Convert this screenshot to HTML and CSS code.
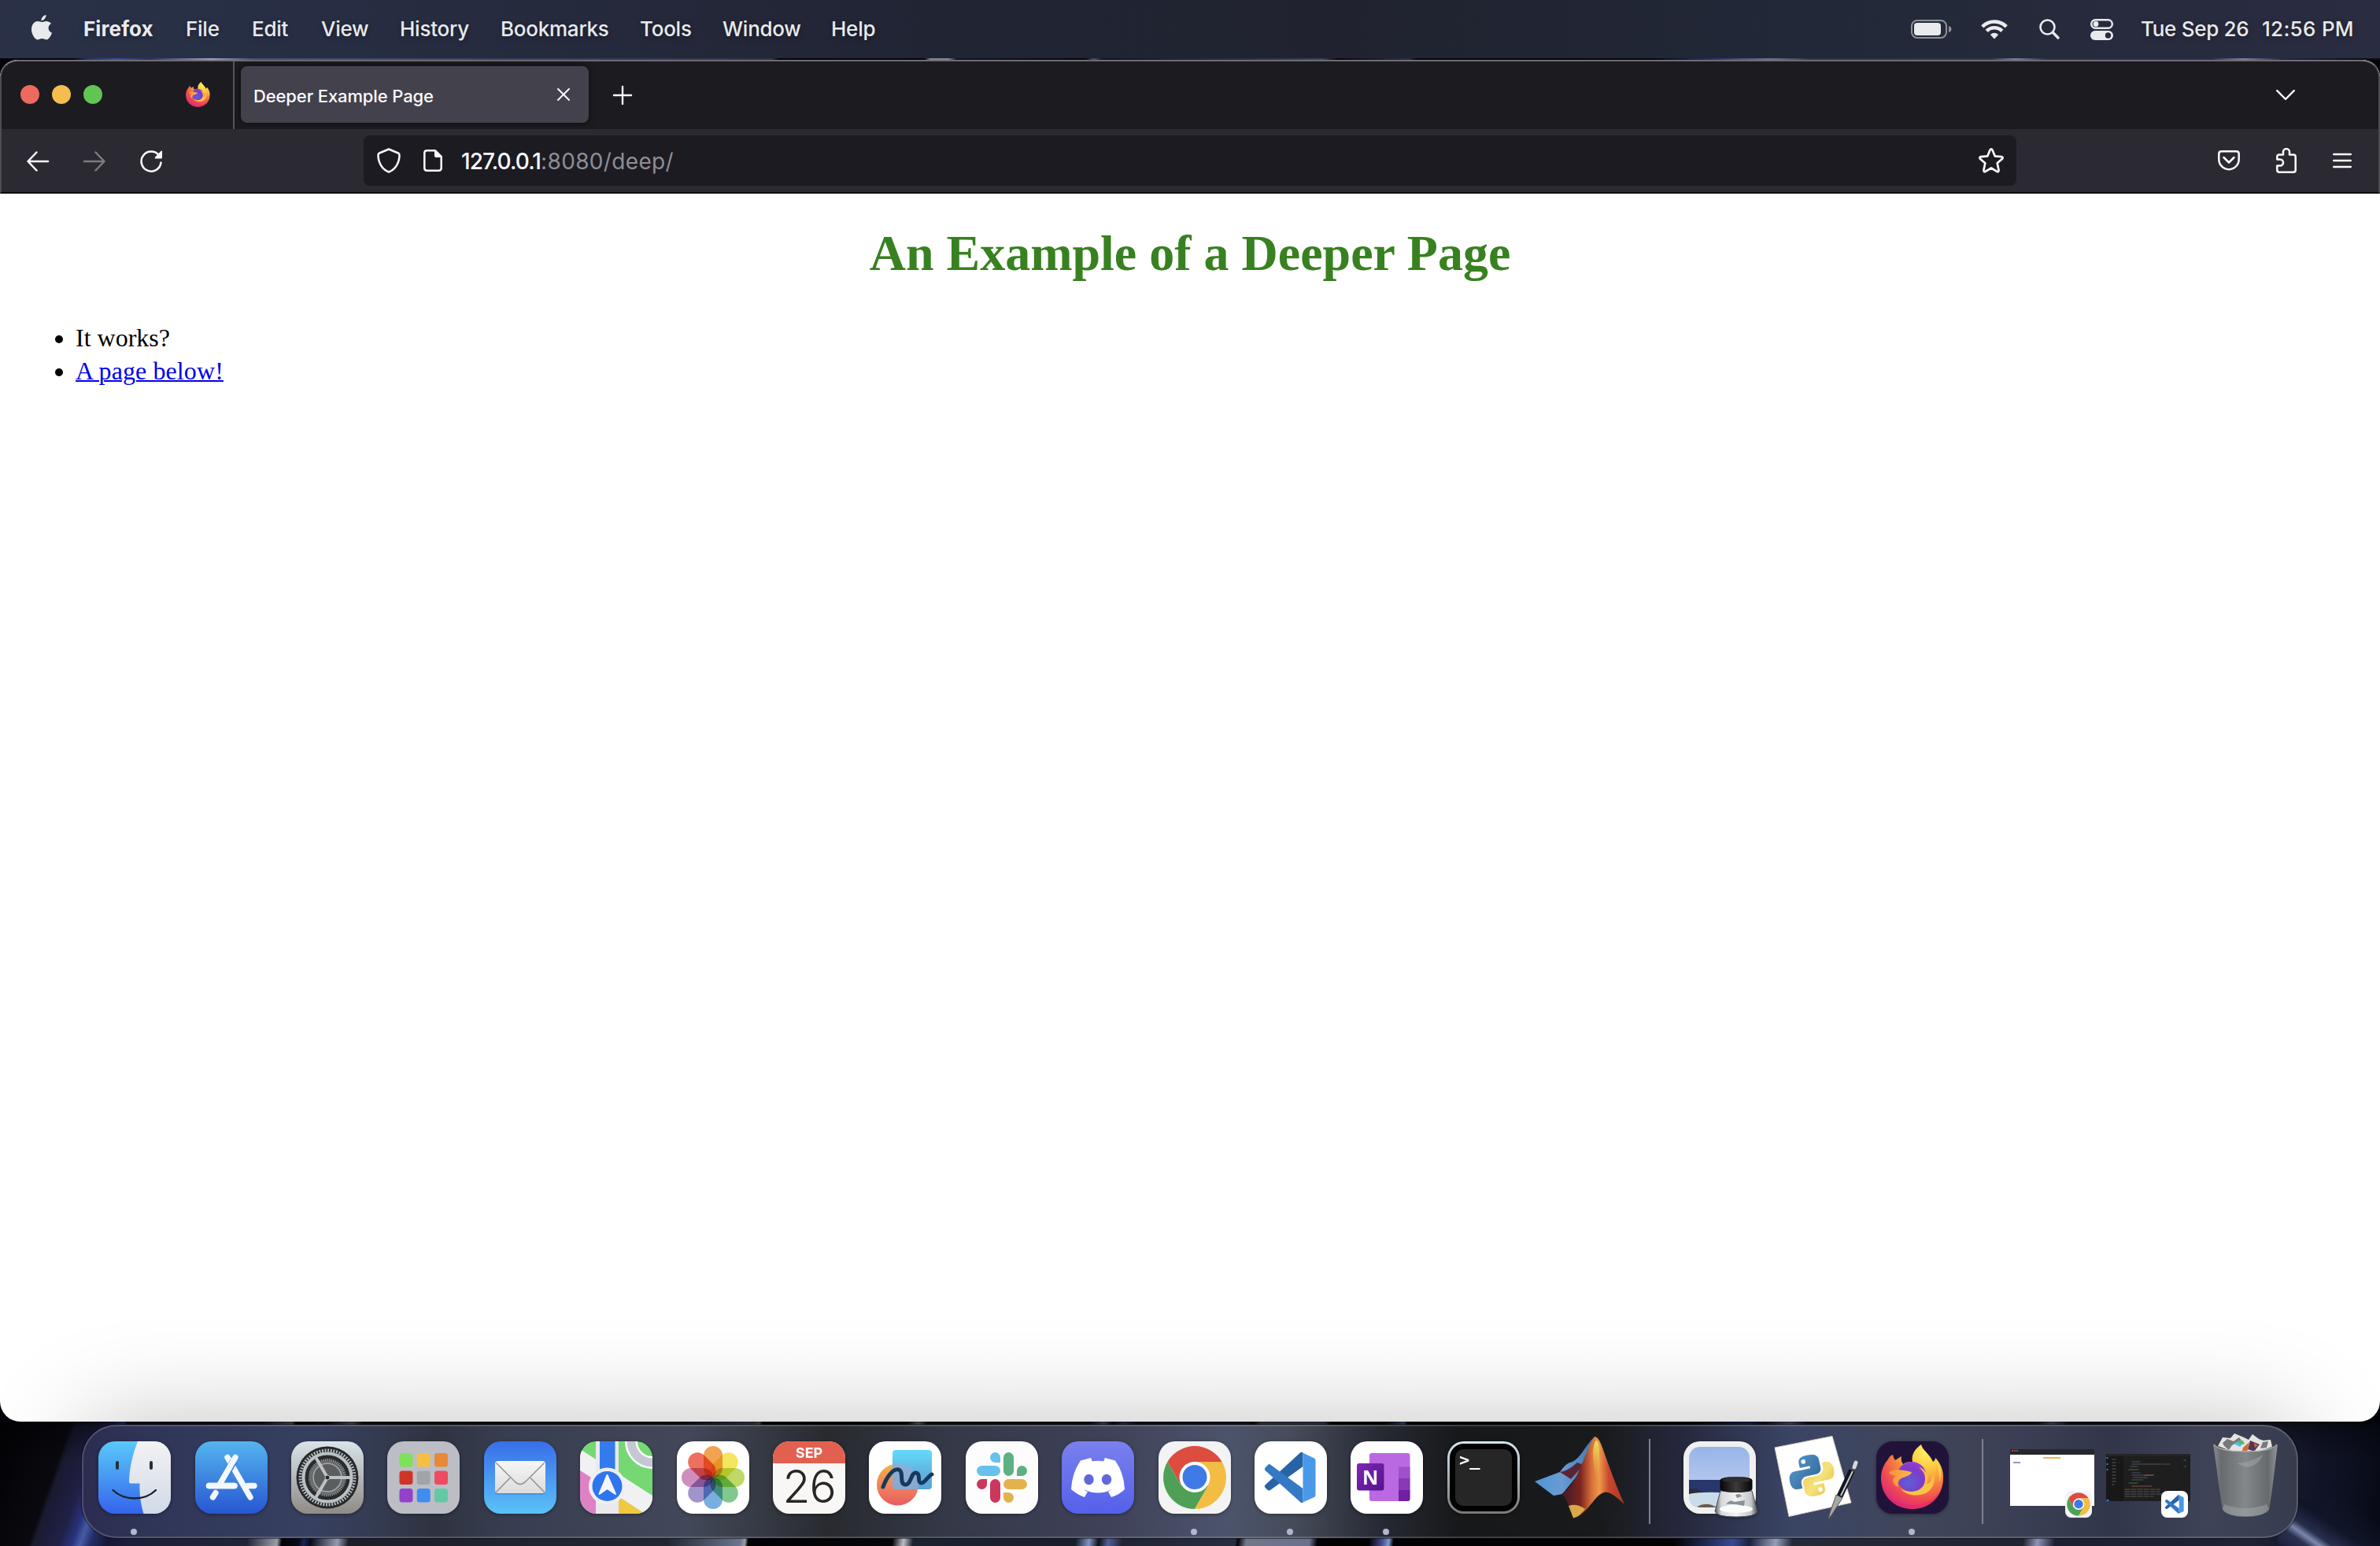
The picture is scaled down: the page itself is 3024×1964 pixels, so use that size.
FILE: index.html
```html
<!DOCTYPE html>
<html lang="en">
<head>
<meta charset="utf-8">
<title>Deeper Example Page</title>
<link rel="stylesheet" href="styles.css">
</head>
<body>
<svg class="defs" width="0" height="0" aria-hidden="true">
  <defs>
    <linearGradient id="gFinder" x2="0" y2="1"><stop stop-color="#5ac9f9"/><stop offset="1" stop-color="#3464ec"/></linearGradient>
    <linearGradient id="gFace" x2="0" y2="1"><stop stop-color="#f3f2f4"/><stop offset="1" stop-color="#d1dae7"/></linearGradient>
    <linearGradient id="gStore" x2="0" y2="1"><stop stop-color="#54b5ee"/><stop offset="1" stop-color="#2756d2"/></linearGradient>
    <linearGradient id="gSet" x2="0" y2="1"><stop stop-color="#d9e4ea"/><stop offset="1" stop-color="#8f8b86"/></linearGradient>
    <linearGradient id="gMail" x2="0" y2="1"><stop stop-color="#386ee9"/><stop offset="1" stop-color="#5bc2f8"/></linearGradient>
    <linearGradient id="gPaper" x2="0" y2="1"><stop stop-color="#f6f6f6"/><stop offset="1" stop-color="#dcdcdc"/></linearGradient>
    <linearGradient id="gDiscord" x2="0" y2="1"><stop stop-color="#7a80ee"/><stop offset="1" stop-color="#5460ea"/></linearGradient>
    <linearGradient id="gFreeSq" x2="0" y2="1"><stop stop-color="#63dafb"/><stop offset=".55" stop-color="#61b6e0"/><stop offset="1" stop-color="#5aa5d6"/></linearGradient>
    <linearGradient id="gFreeC" x2="0" y2="1"><stop stop-color="#f2b344"/><stop offset=".6" stop-color="#ef7e5c"/><stop offset="1" stop-color="#e95c62"/></linearGradient>
    <linearGradient id="gTerm" x2="0" y2="1"><stop stop-color="#d4e6f0"/><stop offset="1" stop-color="#7b7976"/></linearGradient>
    <linearGradient id="gNote" x2="1" y2="1"><stop stop-color="#7d27b4"/><stop offset="1" stop-color="#55138f"/></linearGradient>
    <linearGradient id="gMatR" x2="1" y2="0"><stop stop-color="#3a1a28"/><stop offset=".3" stop-color="#7b2420"/><stop offset=".48" stop-color="#d8703a"/><stop offset=".6" stop-color="#ed9a48"/><stop offset=".75" stop-color="#c9482f"/><stop offset="1" stop-color="#a83426"/></linearGradient>
    <linearGradient id="gMatY" x2="0" y2="1"><stop stop-color="#e9e45a"/><stop offset="1" stop-color="#ee9a42" stop-opacity="0"/></linearGradient>
    <linearGradient id="gMatB" x2="1" y2="0"><stop stop-color="#4f96d6"/><stop offset=".45" stop-color="#6a9bd2"/><stop offset="1" stop-color="#3d78b4"/></linearGradient>
    <linearGradient id="gSky" x2="0" y2="1"><stop stop-color="#98b4e8"/><stop offset="1" stop-color="#c9d3ef"/></linearGradient>
    <linearGradient id="gGlass" x2="1" y2="0"><stop stop-color="#5d6062"/><stop offset=".15" stop-color="#d6d9da"/><stop offset=".5" stop-color="#f2f4f4"/><stop offset=".85" stop-color="#c2c6c7"/><stop offset="1" stop-color="#4e5153"/></linearGradient>
    <linearGradient id="gLid" x2="1" y2="0"><stop stop-color="#050505"/><stop offset=".5" stop-color="#3c3c3c"/><stop offset="1" stop-color="#050505"/></linearGradient>
    <linearGradient id="gPyB" x2="1" y2="1"><stop stop-color="#5a9bcf"/><stop offset="1" stop-color="#2f6496"/></linearGradient>
    <linearGradient id="gPyY" x2="1" y2="1"><stop stop-color="#efc94a"/><stop offset=".5" stop-color="#f6e27c"/><stop offset="1" stop-color="#e3b93c"/></linearGradient>
    <linearGradient id="gBin" x2="1" y2="0"><stop stop-color="#8a8e90"/><stop offset=".12" stop-color="#686c6e"/><stop offset=".5" stop-color="#83888a"/><stop offset=".85" stop-color="#666a6c"/><stop offset="1" stop-color="#939799"/></linearGradient>
    <radialGradient id="gFox" cx=".72" cy=".12" r=".95"><stop stop-color="#fff261"/><stop offset=".3" stop-color="#fbc43f"/><stop offset=".55" stop-color="#f6803c"/><stop offset=".8" stop-color="#ee4455"/><stop offset="1" stop-color="#d92a80"/></radialGradient>
    <radialGradient id="gGlobe" cx=".4" cy=".7" r=".8"><stop stop-color="#5c5fd6"/><stop offset=".6" stop-color="#7d3bc8"/><stop offset="1" stop-color="#a23bdd"/></radialGradient>
    <linearGradient id="gHead" x2="1" y2="0"><stop stop-color="#f6903a"/><stop offset="1" stop-color="#fbb94a"/></linearGradient>
    <clipPath id="squircle"><rect width="92" height="92" rx="21"/></clipPath>
  </defs>

  <symbol id="firefox" viewBox="0 0 80 82">
    <path fill="url(#gFox)" d="M15 13C16 17 17 19 18 20C21 18 24 16 26 15C25 19 26 22 28 25C32 22 36 22 40 22C38 12 44 5 51 0C53 8 62 12 66 22C68 21 69 19 69 17C76 24 80 34 79 45C78 66 61 82 40 82C17 82 0 65 0 43C0 33 4 24 9 19C10 16 12 14 15 13Z"/>
    <path fill="#e5245f" opacity=".45" d="M3 55C10 70 24 77 40 77S70 70 77 56C72 73 57 82 40 82C22 82 8 71 3 55Z"/>
    <circle cx="39" cy="41" r="19" fill="url(#gGlobe)"/>
    <path fill="#fbc344" d="M48 29C57 31 61 40 58 50C62 50 66 44 66 38C70 46 66 55 60 60C50 67 32 66 25 56C34 62 50 62 55 50C58 41 55 34 48 29Z"/>
    <path fill="#ffd84a" d="M69 17C76 26 78 38 74 48C75 36 73 26 69 17Z"/>
    <path fill="url(#gHead)" d="M10 36C14 31 24 32 29 33C33 34 38 34 39 36C36 40 30 41 26 43C22 45 21 49 22 54C15 52 12 42 20 40C17 40 12 38 10 36Z"/>
  </symbol>

  <symbol id="chrome" viewBox="0 0 92 92">
    <rect width="92" height="92" rx="21" fill="#f3f3f4"/>
    <path fill="#dc4c3f" d="M11.4 26A40 40 0 0 1 80.6 26H46L28.7 56Z"/>
    <path fill="#4fa056" d="M11.4 26A40 40 0 0 0 46 86L63.3 56H28.7Z"/>
    <path fill="#f2bd42" d="M46 86A40 40 0 0 0 80.6 26H46L63.3 56Z"/>
    <circle cx="46" cy="45.500" r="19.500" fill="#fff"/><circle cx="46" cy="45.500" r="15.500" fill="#3f7be6"/>
  </symbol>

  <symbol id="vscode" viewBox="0 0 92 92">
    <rect width="92" height="92" rx="21" fill="#fff"/>
    <path fill="#2763a5" d="M58 14.500Q60 13.500 61.500 14V32L20 62Q18.500 63 17 62L13.500 59Q12 57 13.500 55.500Z"/>
    <path fill="#3478c6" d="M13.500 37Q12 35.500 13.500 33.500L17 30Q18.500 28.500 20 29.500L61.500 60V78Q60 79 58 77Z"/>
    <path fill="#4a99e9" d="M60 14L76 21.500Q77.500 22.500 77.500 24V68Q77.500 70 76 71L60 78Q61.500 77 61.500 75V17Q61.500 15 60 14Z"/>
  </symbol>
</svg>

<header class="menubar">
  <svg class="apple" viewBox="0 0 26 32"><path fill="#e9eaec" d="M18.500 0C18.800 3.600 15.500 7.300 12.500 7.200C12.200 3.800 15.400 .300 18.500 0ZM13.400 9C15 9 16.600 7.800 19 7.900C21.500 8 23.800 9.200 25 11C19.800 14 20.900 20.800 26 22.800C25 25.500 22.300 31.300 19.300 31.400C17.200 31.500 16.200 30.100 13.500 30.100C10.900 30.100 9.900 31.400 7.900 31.400C4.400 31.500 .2 24.600 0 18.800C-.1 12.400 3.600 8 7.900 8C10.300 8 12 9 13.400 9Z"/></svg>
  <nav class="menus">
    <span class="m1">Firefox</span><span class="m2">File</span><span class="m3">Edit</span><span class="m4">View</span><span class="m5">History</span><span class="m6">Bookmarks</span><span class="m7">Tools</span><span class="m8">Window</span><span>Help</span>
  </nav>
  <div class="status">
    <svg class="battery" viewBox="0 0 52 24"><rect x="1" y="1" width="44" height="22" rx="7" fill="none" stroke="#8d919b" stroke-width="2"/><rect x="4" y="4" width="34" height="16" rx="4" fill="#e9eaec"/><path fill="#8d919b" d="M48 8Q51.500 9 51.500 12T48 16Z"/></svg>
    <svg class="wifi" viewBox="0 0 34 26"><g fill="none" stroke="#e9eaec" stroke-width="4.600"><path d="M1.800 9.800A21.500 21.500 0 0 1 32.200 9.800"/><path d="M7.200 15.300A13.800 13.800 0 0 1 26.800 15.300"/></g><path fill="#e9eaec" d="M11.800 20Q17 15.500 22.200 20L17 25.500Z"/></svg>
    <svg class="search" viewBox="0 0 26 26"><circle cx="10.500" cy="10.500" r="9" fill="none" stroke="#e9eaec" stroke-width="2.600"/><path stroke="#e9eaec" stroke-width="3.400" stroke-linecap="round" d="M17.300 17.300L24 24"/></svg>
    <svg class="cc" viewBox="0 0 29 27"><rect x="1.200" y="1.200" width="26.600" height="10.600" rx="5.300" fill="none" stroke="#e9eaec" stroke-width="2.400"/><circle cx="7" cy="6.500" r="3.400" fill="#e9eaec"/><rect y="15" width="29" height="12" rx="6" fill="#e9eaec"/><circle cx="22.500" cy="21" r="3.700" fill="#272c3d"/></svg>
    <span class="date">Tue Sep 26</span><span class="time">12:56 PM</span>
  </div>
</header>
<div class="sliver"></div>

<main class="window">
  <div class="tabstrip">
    <div class="lights"><i class="red"></i><i class="yellow"></i><i class="green"></i></div>
    <svg class="pin"><use href="#firefox"/></svg>
    <div class="divider"></div>
    <div class="tab"><span>Deeper Example Page</span>
      <svg class="close" viewBox="0 0 16 16"><path stroke="#fbfbfe" stroke-width="2" stroke-linecap="round" d="M1 1L15 15M15 1L1 15"/></svg></div>
    <svg class="plus" viewBox="0 0 24 24"><path stroke="#fbfbfe" stroke-width="2.400" stroke-linecap="round" d="M12 1V23M1 12H23"/></svg>
    <svg class="alltabs" viewBox="0 0 24 14"><path fill="none" stroke="#fbfbfe" stroke-width="2.400" stroke-linecap="round" stroke-linejoin="round" d="M1.200 1.200L12 12L22.800 1.200"/></svg>
  </div>
  <div class="toolbar">
    <div class="navbtns">
      <svg viewBox="0 0 28 26"><path fill="none" stroke="#fbfbfe" stroke-width="2.500" stroke-linecap="round" stroke-linejoin="round" d="M27 13H1.500M12.500 1.500L1.500 13L12.500 24.500"/></svg>
      <svg viewBox="0 0 28 26"><path fill="none" stroke="#7c7b81" stroke-width="2.500" stroke-linecap="round" stroke-linejoin="round" d="M1 13H26.500M15.500 1.500L26.500 13L15.500 24.500"/></svg>
      <svg class="reload" viewBox="0 0 28 28"><path fill="none" stroke="#fbfbfe" stroke-width="2.500" stroke-linecap="round" d="M26.500 15.500A12.500 12.500 0 1 1 24 6.500"/><path fill="#fbfbfe" d="M28 1.500V9Q28 10.500 26.500 10.500H19.500Q18 10 19 8.800L26.300 1Q27.500 0 28 1.500Z"/></svg>
    </div>
    <div class="urlbar">
      <svg class="shield" viewBox="0 0 30 32"><path fill="none" stroke="#fbfbfe" stroke-width="2.500" stroke-linejoin="round" d="M15 1.500L27 6.500Q28.500 7.200 28.500 9C28.500 18 24 27 15 30.500C6 27 1.500 18 1.500 9Q1.500 7.200 3 6.500Z"/></svg>
      <svg class="page" viewBox="0 0 24 28"><path fill="none" stroke="#fbfbfe" stroke-width="2.500" stroke-linejoin="round" d="M15 1.300H4.500Q1.300 1.300 1.300 4.500V23.500Q1.300 26.700 4.500 26.700H19.500Q22.700 26.700 22.700 23.500V9Z"/><path fill="#fbfbfe" d="M14 1L23.500 10H16Q14 10 14 8Z"/></svg>
      <span class="url"><b>127.0.0.1</b>:8080/deep/</span>
      <svg class="star" viewBox="0 0 30 30"><path fill="none" stroke="#fbfbfe" stroke-width="2.500" stroke-linejoin="round" d="M13.700 2.200Q15 .2 16.300 2.200L19.400 9.700L27.300 10.400Q29.600 11 28.200 12.900L22.200 18.100L24 26.500Q24 28.800 21.900 28.100L15 23.900L8.100 28.100Q6 28.800 6 26.500L7.800 18.100L1.800 12.900Q.4 11 2.700 10.400L10.600 9.700Z"/></svg>
    </div>
    <div class="tools">
      <svg class="pocket" viewBox="0 0 28 26"><path fill="none" stroke="#fbfbfe" stroke-width="2.500" stroke-linecap="round" stroke-linejoin="round" d="M4.500 1.300H23.500Q26.700 1.300 26.700 4.500V11.500A12.700 12.700 0 0 1 1.300 11.500V4.500Q1.300 1.300 4.500 1.300ZM7.500 9L14 15.500L20.500 9"/></svg>
      <svg class="ext" viewBox="0 0 26 32"><path fill="none" stroke="#fbfbfe" stroke-width="2.500" stroke-linejoin="round" d="M9 8.500V5A4 4 0 0 1 17 5V8.500H22Q24.700 8.500 24.700 11.200V28Q24.700 30.700 22 30.700H4Q1.300 30.700 1.300 28V22.500H5A4 4 0 0 0 5 14.500H1.300V11.200Q1.300 8.500 4 8.500Z"/></svg>
      <svg class="burger" viewBox="0 0 24 20"><path stroke="#fbfbfe" stroke-width="2.400" stroke-linecap="round" d="M1.200 2H22.800M1.200 10H22.800M1.200 18H22.800"/></svg>
    </div>
  </div>
  <article class="content">
    <h1>An Example of a Deeper Page</h1>
    <ul><li>It works?</li><li><a href="#">A page below!</a></li></ul>
  </article>
</main>

<footer class="desk">
  <div class="dock">
    <div class="slot running"><svg class="app" viewBox="0 0 92 92"><g clip-path="url(#squircle)"><rect width="92" height="92" fill="url(#gFinder)"/><path fill="url(#gFace)" d="M50 0C43 18 39.500 34 39 51Q39 53.500 41 53.500H52.500C52 68 54 80 57.500 92H92V0Z"/><path d="M24 27V34M67 27V34" stroke="#273039" stroke-width="4" stroke-linecap="round"/><path fill="none" stroke="#1b232c" stroke-width="2.400" stroke-linecap="round" d="M18.500 62C33 76 59 76 73 62"/></g></svg></div>
    <div class="slot"><svg class="app" viewBox="0 0 92 92"><rect width="92" height="92" rx="21" fill="url(#gStore)"/><g stroke="#f4f8fd" stroke-width="7.400" stroke-linecap="round"><path d="M41 20.500L70 71M17.500 56.500H50M67 56.500H75M26 65.500L22.500 71"/></g><path stroke="#3c84e4" stroke-width="9.400" d="M49 25L34 51"/><path stroke="#f4f8fd" stroke-width="7.400" stroke-linecap="round" d="M51 20.500L31.500 54"/><path stroke="#f4f8fd" stroke-width="7.400" stroke-linecap="round" d="M17.500 56.500H50"/></svg></div>
    <div class="slot"><svg class="app" viewBox="0 0 92 92"><rect width="92" height="92" rx="21" fill="url(#gSet)"/><circle cx="46" cy="46" r="39.500" fill="#26282a"/><circle cx="46" cy="46" r="34.500" fill="none" stroke="#b4bbbe" stroke-width="4" stroke-dasharray="1.900 1.712"/><circle cx="46" cy="46" r="30.500" fill="#2a2c2d" stroke="#bac2c5" stroke-width="4"/><circle cx="46" cy="46" r="22" fill="#55585a" stroke="#85898b" stroke-width="4" stroke-dasharray="1.500 1"/><circle cx="46" cy="46" r="18" fill="#5b5d5e" stroke="#9a9fa1" stroke-width="2"/><path stroke="#bcc3c6" stroke-width="4" d="M46 46H75M46 46L31.500 20.900M46 46L31.500 71.100"/><circle cx="46" cy="46" r="3" fill="#2a2c2d" stroke="#bcc3c6"/></svg></div>
    <div class="slot"><svg class="app" viewBox="0 0 92 92"><rect width="92" height="92" rx="21" fill="#bdbdc5"/><g><rect x="15.500" y="15" width="17" height="17.500" rx="3.500" fill="#7fe05c"/><rect x="37.700" y="15" width="17" height="17.500" rx="3.500" fill="#f5bf42"/><rect x="60" y="15" width="17" height="17.500" rx="3.500" fill="#e78a38"/><rect x="15.500" y="37.500" width="17" height="17.500" rx="3.500" fill="#cf3527"/><rect x="37.700" y="37.500" width="17" height="17.500" rx="3.500" fill="#9fa5a8"/><rect x="60" y="37.500" width="17" height="17.500" rx="3.500" fill="#ec4b60"/><rect x="15.500" y="60" width="17" height="17.500" rx="3.500" fill="#9341cb"/><rect x="37.700" y="60" width="17" height="17.500" rx="3.500" fill="#3f8df0"/><rect x="60" y="60" width="17" height="17.500" rx="3.500" fill="#63c9a4"/></g></svg></div>
    <div class="slot"><svg class="app" viewBox="0 0 92 92"><rect width="92" height="92" rx="21" fill="url(#gMail)"/><rect x="14" y="26" width="64" height="41.500" rx="4" fill="#2a5a9a" opacity=".4"/><rect x="14" y="25" width="64" height="41" rx="4" fill="url(#gPaper)"/><g fill="none" stroke="#8e8e8e" stroke-width="1.400"><path d="M15.500 27.500L39 51Q46 58 53 51L76.500 27.500M15.500 64.500L33 46.500M76.500 64.500L59 46.500"/></g></svg></div>
    <div class="slot"><svg class="app" viewBox="0 0 92 92"><g clip-path="url(#squircle)"><rect width="92" height="92" fill="#76d873"/><path fill="#f1f1f4" d="M0 10L92 69V92H82L0 38Z"/><path fill="#dd82c4" d="M0 37L22 51V92H0Z"/><path fill="#f2c841" d="M48 70L82 92H48Z"/><path fill="#e9e9ee" d="M20 0H49V92H20Z"/><path fill="#347bee" d="M25 0H44.500V50H25Z"/><circle cx="92" cy="0" r="27" fill="none" stroke="#fff" stroke-width="16"/><circle cx="92" cy="0" r="27" fill="none" stroke="#c5c7d2" stroke-width="11"/></g><circle cx="34.500" cy="57" r="23.500" fill="#efeff2"/><circle cx="34.500" cy="57" r="19" fill="#2f76ee"/><path fill="#f5f6f8" stroke="#f5f6f8" stroke-width="2" stroke-linejoin="round" d="M34.500 43L45 67L34.500 60L24.500 67Z"/></svg></div>
    <div class="slot"><svg class="app" viewBox="0 0 92 92"><rect width="92" height="92" rx="21" fill="#fff"/><g opacity=".96"><g class="petals"><rect x="34" y="6" width="24" height="40" rx="12" fill="#f1a04a"/><rect x="34" y="6" width="24" height="40" rx="12" fill="#f5e65c" transform="rotate(45 46 46)"/><rect x="34" y="6" width="24" height="40" rx="12" fill="#bcd860" transform="rotate(90 46 46)"/><rect x="34" y="6" width="24" height="40" rx="12" fill="#7cc58a" transform="rotate(135 46 46)"/><rect x="34" y="6" width="24" height="40" rx="12" fill="#74acdf" transform="rotate(180 46 46)"/><rect x="34" y="6" width="24" height="40" rx="12" fill="#a08fca" transform="rotate(225 46 46)"/><rect x="34" y="6" width="24" height="40" rx="12" fill="#cd8abc" transform="rotate(270 46 46)"/><rect x="34" y="6" width="24" height="40" rx="12" fill="#ef6a58" transform="rotate(315 46 46)"/></g></g></svg></div>
    <div class="slot"><div class="app calendar"><span class="month">SEP</span><span class="day">26</span></div></div>
    <div class="slot"><svg class="app" viewBox="0 0 92 92"><rect width="92" height="92" rx="21" fill="#fff"/><circle cx="36.500" cy="55" r="26.500" fill="url(#gFreeC)"/><rect x="30" y="11" width="50" height="50" rx="4" fill="url(#gFreeSq)"/><path fill="#9aa9cf" opacity=".75" d="M30 29.500A26.500 26.500 0 0 1 62.500 61H34Q30 61 30 57Z"/><path fill="none" stroke="#173a5c" stroke-width="5" stroke-linecap="round" d="M18 58C22 47 30 34 38 36C45 39 38 54 46 55C54 56 53 39 60 40C67 41 60 53 67 53C71 53 75 44 80 42"/></svg></div>
    <div class="slot"><svg class="app" viewBox="0 0 92 92"><rect width="92" height="92" rx="21" fill="#fdfdfd"/><path fill="#68c1ec" d="M20.500 31H37.500A6.500 6.500 0 0 1 37.500 44H20.500A6.500 6.500 0 0 1 20.500 31ZM37.500 14A6.500 6.500 0 0 1 44 20.500V27H37.500A6.500 6.500 0 0 1 37.500 14Z"/><path fill="#5bb181" d="M48 20.500A6.500 6.500 0 0 1 61 20.500V37.500A6.500 6.500 0 0 1 48 37.500ZM65 37.500A6.500 6.500 0 1 1 71.500 44H65Z"/><path fill="#cc375d" d="M31 54.500A6.500 6.500 0 0 1 44 54.500V71.500A6.500 6.500 0 0 1 31 71.500ZM27 48V54.500A6.500 6.500 0 1 1 20.500 48Z"/><path fill="#e1b34c" d="M54.500 48H71.500A6.500 6.500 0 0 1 71.500 61H54.500A6.500 6.500 0 0 1 54.500 48ZM48 65H54.500A6.500 6.500 0 1 1 48 71.500Z"/></svg></div>
    <div class="slot"><svg class="app" viewBox="0 0 92 92"><rect width="92" height="92" rx="21" fill="url(#gDiscord)"/><path fill="#fff" d="M37 21L24 24.500Q13 40 12 61Q20 68 29 71L33 64Q30 63 28 61Q46 70 64 61Q61 63 59 64L63 71Q73 68 80 61Q79 40 68 24.500L55 21L53 25.500Q46 24 39 25.500Z"/><ellipse cx="34.500" cy="48.500" rx="6.200" ry="6.800" fill="#6268d8"/><ellipse cx="57" cy="48.500" rx="6.200" ry="6.800" fill="#6268d8"/></svg></div>
    <div class="slot running"><svg class="app"><use href="#chrome"/></svg></div>
    <div class="slot running"><svg class="app"><use href="#vscode"/></svg></div>
    <div class="slot running"><svg class="app" viewBox="0 0 92 92"><rect width="92" height="92" rx="21" fill="#fff"/><rect x="24" y="15" width="51.500" height="61" rx="3" fill="#bb69e2"/><path fill="#a04fce" d="M61 32.500H75.500V47H61Z"/><path fill="#8838b8" d="M61 47H75.500V61.500H61Z"/><path fill="#701fa2" d="M61 61.500H75.500V73Q75.500 76 72.500 76H61Z"/><rect x="8" y="28" width="34.500" height="34.500" rx="3" fill="url(#gNote)"/><text class="onenote" x="25.200" y="54.500">N</text></svg></div>
    <div class="slot"><svg class="app" viewBox="0 0 92 92"><rect width="92" height="92" rx="21" fill="url(#gTerm)"/><rect x="3" y="3" width="86" height="86" rx="18" fill="#020202"/><rect x="10" y="10" width="72" height="72" rx="10" fill="#262626"/><text class="prompt" x="15" y="31">&gt;_</text></svg></div>
    <div class="slot"><svg class="wide" viewBox="0 0 114 104"><path fill="url(#gMatB)" d="M0 57L32 45C38 37 40 34 48 32C59 26 64 12 76 0L70 30L35 73L24 75Z"/><path fill="#5b2436" d="M32 45L46 54L62 36L54 33Q42 44 32 45Z"/><path fill="url(#gMatR)" d="M76 0C80 0 83 6 86 14C96 42 104 64 114 86C105 78 98 71 90 70.500C76 72 67 101 49 103.500C45 93 41 79 34 73C56 60 62 21 76 0Z"/><path fill="url(#gMatY)" d="M78 5Q82 6 82 20Q83 45 80 60Q74 38 74 20Q75 8 78 5Z"/><path fill="#eec04f" opacity=".85" d="M43 88Q53 84 64 92Q57 102 49 103.500Z"/></svg></div>
    <div class="rule"></div>
    <div class="slot"><svg class="app" viewBox="0 0 92 92"><rect width="92" height="92" rx="21" fill="#f0f0f1"/><rect x="7" y="7" width="77" height="77" rx="14" fill="url(#gSky)"/><path fill="#27376d" d="M7 49H84V66H7Z"/><path fill="#2b2c38" d="M7 61Q18 58 25 66L7 67Z"/><path fill="#c8dcea" d="M7 67Q30 62 84 68V70Q84 84 70 84H21Q7 84 7 70Z"/><path fill="#6b5a4e" d="M17 83Q30 76 42 84H21Z"/><path fill="url(#gGlass)" stroke="#4a4e50" stroke-width="1" d="M47 63H87L94 89Q92 96 67 96T40 89Z"/><ellipse cx="67" cy="86" rx="21" ry="5" fill="#fafbfb"/><path fill="#8b9195" d="M54 80Q60 73 64 77L78 75L77 82Q64 79 54 80ZM66 68Q72 65 74 70L68 72Z"/><path fill="url(#gLid)" d="M46.500 50Q46.500 45 67 45T87.500 50V60Q87.500 65 67 65T46.500 60Z"/><ellipse cx="67" cy="49" rx="18" ry="3" fill="#2e2f30"/></svg></div>
    <div class="slot"><svg class="idle" viewBox="0 0 106 108"><path fill="#fff" stroke="#d6cfc8" d="M0 15L73 0.500L97 85L18 102.500Z"/><g transform="rotate(-12 47 50)"><path fill="url(#gPyB)" d="M46 24C34 24 34 29 34 33V38H47V41H27C19 41 18 48 18 53C18 60 21 64 27 64H32V58C32 53 36 50 41 50H53C57 50 60 47 60 43V33C60 26 54 24 46 24Z"/><path fill="url(#gPyY)" d="M48 77C60 77 60 72 60 68V63H47V60H67C75 60 76 53 76 48C76 41 73 37 67 37H63V43C63 48 58 52 53 52H41C37 52 34 55 34 59V68C34 75 40 77 48 77Z"/><circle cx="40" cy="31" r="2.800" fill="#fff"/><circle cx="54" cy="70" r="2.800" fill="#fff"/></g><path stroke="#111722" stroke-width="8" d="M98 44L82 78"/><path stroke="#c8cacb" stroke-width="2" d="M99 45L84 76"/><path fill="#a6a8a2" stroke="#55565a" d="M78 75L86 79L72 101L68 106L70 98Z"/><path stroke="#d8d8d8" stroke-width="5" stroke-linecap="round" d="M103 34L101 40"/></svg></div>
    <div class="slot running"><div class="app foxtile"><svg><use href="#firefox"/></svg></div></div>
    <div class="rule"></div>
    <div class="slot"><div class="mini light"><div class="minibar"><i></i><i></i><i></i></div><span class="minihead"></span><span class="miniline"></span><svg class="badge"><use href="#chrome"/></svg></div></div>
    <div class="slot"><div class="mini dark"><svg class="code" viewBox="0 0 106 60"><path fill="#1e1e1e" d="M22 3H106V60H22Z"/><path fill="#252526" d="M0 0H106V3H0Z"/><g stroke-width="1" fill="none"><path stroke="#a0a0a0" opacity=".5" stroke-dasharray="5 3" d="M7 7H12M7 11H16M7 15H14M7 19H15M7 23H14M7 27H13M7 31H15M7 35H12M7 39H10"/><path stroke="#7c9db0" opacity=".45" d="M32 10H43M32 13H70M30 16H40M32 24H43M32 27H60M34 30H52M32 33H47M71 13H81"/><path stroke="#6a9955" opacity=".6" d="M28 20H41M28 37H40M98 8H101M98 16H101"/><path stroke="#b47860" opacity=".6" d="M32 41H58M48 27H60"/><path stroke="#8b8b8b" opacity=".5" stroke-dasharray="7 1" d="M23 45H68M23 48H68M23 51H70M23 54H60"/><path stroke="#2584d8" stroke-width="2" d="M1 4V6M1 12V14M1 19V21M0 59H3"/></g></svg><svg class="badge"><use href="#vscode"/></svg></div></div>
    <div class="slot"><svg class="trash" viewBox="0 0 82 106"><path fill="#3e4245" d="M1 14Q4 7 41 7T81 14Q78 24 41 24T1 14Z"/><path fill="#e4e4e2" d="M6 16L12 5L22 6L27 0L39 5L45 8L50 1L58 7L64 9L73 8L75 17L58 23L22 22Z"/><path fill="#77797b" d="M12 12L18 7L26 10L33 5L36 9L24 15L20 21L14 16ZM63 11L70 10L68 18L60 19Z"/><path fill="#4ec0e4" d="M26 13L34 9L39 12L34 17Z"/><path fill="#57b95a" d="M30 10L38 9L40 14L34 13Z"/><path fill="#5b3550" d="M47 9L59 14L52 23L44 20Z"/><path fill="#d36a38" d="M38 18L46 11L43 24L37 22ZM52 12L57 15L53 18Z"/><path fill="url(#gBin)" d="M0 14C4 27 78 27 82 14C78 45 76 68 71 97C66 108 17 108 12 97C7 68 5 45 0 14Z"/><path fill="#a9aeb0" opacity=".45" d="M30 38Q48 37 63 27Q58 41 42 43ZM14 90Q41 100 68 90L71 96Q64 106 41 106T12 96Z"/><path fill="none" stroke="#b4b8ba" stroke-width="1.500" d="M1 14C6 26 76 26 81 14"/></svg></div>
  </div>
</footer>
</body>
</html>
```
FILE: styles.css
```css
* { box-sizing: border-box; }
body {
  margin: 0;
  width: 3024px;
  height: 1964px;
  overflow: hidden;
  display: flex;
  flex-direction: column;
  background: #04050a;
  font-family: Inter, "Liberation Sans", sans-serif;
}
svg { display: block; flex: none; overflow: visible; }
.defs { position: absolute; }

/* Menu bar */
.menubar {
  flex: none;
  height: 74px;
  display: flex;
  align-items: center;
  padding: 0 34px 0 40px;
  background: linear-gradient(90deg, #2a3146 0, #283046 250px, #262b3f 600px, #212433 1200px, #20232f 1700px, #222838 2300px, #272b3d 2700px, #2a2c42 3024px);
  color: #e9eaec;
  font-size: 26px;
  font-weight: 500;
  text-shadow: 0 2px 6px rgba(0, 0, 0, .35);
}
.apple { width: 26px; height: 32px; margin-top: -4px; }
.menus { display: flex; margin: -1px 0 0 40px; white-space: nowrap; }
.menus span { letter-spacing: -.25px; }
.menus .m1 { width: 130px; font-weight: 700; letter-spacing: .1px; }
.menus .m2 { width: 84px; }
.menus .m3 { width: 88px; }
.menus .m4 { width: 100px; }
.menus .m5 { width: 128px; }
.menus .m6 { width: 177px; }
.menus .m7 { width: 105px; }
.menus .m8 { width: 138px; }
.status { margin-left: auto; display: flex; align-items: center; white-space: nowrap; }
.battery { width: 52px; height: 24px; margin-right: 37px; }
.wifi { width: 34px; height: 26px; margin-right: 40px; }
.search { width: 26px; height: 26px; margin-right: 39px; }
.cc { width: 29px; height: 27px; margin-right: 35px; }
.date { width: 154px; margin-top: -2px; letter-spacing: -.3px; }
.time { width: 116px; margin-top: -2px; letter-spacing: .3px; }
.sliver {
  flex: none;
  height: 2px;
  background: linear-gradient(90deg, #05060a 95px, #26306a 110px, #3f4f9a 150px, #28306a 190px, #98a4c8 268px, #465070 320px, #2c364c 980px, #05060a 990px, #05060a 1175px, #808898 1182px, #808898 1205px, #10142a 1215px, #05060a 1380px, #4c5468 1390px, #10142a 1400px, #2c3448 1600px, #3c4458 1680px, #05060a 1700px, #2a3048 1790px, #05060a 1800px, #05060a 2100px, #2a3670 2180px, #6c7490 2250px, #2c364c 2300px, #2c364c 2530px, #7882a4 2560px, #283048 2600px, #283048 2810px, #7882a4 2850px, #202840 2900px, #0a0e18 3000px);
}

/* Browser window */
.window {
  flex: none;
  height: 1730px;
  display: flex;
  flex-direction: column;
  border-radius: 22px 22px 26px 26px;
  overflow: hidden;
  background: #fff;
}
.tabstrip {
  height: 88px;
  display: flex;
  align-items: center;
  padding: 0 106px 0 24px;
  background: #1c1b20;
  border: solid #4d4c52;
  border-width: 2px 2px 0;
  border-top-color: #6d6c72;
  border-radius: 22px 22px 0 0;
}
.lights { display: flex; gap: 16px; margin-top: -2px; }
.lights i { width: 24px; height: 24px; border-radius: 50%; }
.red { background: #ed6a5e; }
.yellow { background: #f4be4f; }
.green { background: #61c554; }
.pin { width: 31px; height: 32px; margin: -2px 0 0 106px; }
.divider { width: 2px; height: 86px; margin-left: 29px; background: #56555c; }
.tab {
  width: 442px;
  height: 72px;
  margin: -2px 0 0 8px;
  padding: 0 24px 0 16px;
  display: flex;
  align-items: center;
  justify-content: space-between;
  border-radius: 8px;
  background: #43414c;
  box-shadow: 0 0 8px rgba(0, 0, 0, .6);
  color: #fbfbfe;
  font-size: 22px;
  font-weight: 500;
  letter-spacing: -.12px;
}
.tab span { padding-top: 4px; white-space: nowrap; }
.close { width: 16px; height: 16px; }
.plus { width: 24px; height: 24px; margin: 0 0 0 31px; }
.alltabs { width: 24px; height: 14px; margin-left: auto; }
.toolbar {
  height: 82px;
  display: flex;
  align-items: center;
  padding: 0 34px 0 32px;
  background: #2b2a33;
  border: solid #4d4c52;
  border-width: 0 2px 2px;
  border-bottom-color: #0c0c0d;
}
.navbtns { display: flex; align-items: center; gap: 44px; width: 428px; margin-top: 1px; }
.navbtns svg { width: 28px; height: 26px; }
.navbtns .reload { height: 28px; }
.urlbar {
  width: 2100px;
  height: 64px;
  padding: 0 16px 0 17px;
  display: flex;
  align-items: center;
  border-radius: 8px;
  background: #1c1b22;
}
.shield { width: 30px; height: 32px; }
.page { width: 24px; height: 28px; margin-left: 29px; }
.url { margin: 2px 0 0 24px; font-size: 28px; font-weight: 400; letter-spacing: .35px; color: #8f8e94; white-space: nowrap; }
.url b { font-weight: 500; color: #fbfbfe; letter-spacing: -.9px; }
.star { width: 32px; height: 32px; margin-left: auto; }
.tools { display: flex; align-items: center; margin-left: auto; }
.pocket { width: 28px; height: 26px; }
.ext { width: 26px; height: 32px; margin-left: 46px; }
.burger { width: 24px; height: 20px; margin-left: 46px; }

/* Page */
.content { flex: 1; padding: 39px 16px; font-family: "Liberation Serif", "Times New Roman", serif; font-size: 32px; }
.content h1 { margin: 0; font-size: 64px; line-height: 74px; text-align: center; color: #388120; }
.content ul { margin: 49px 0 0; padding-left: 80px; line-height: 42px; color: #000; }
.content a { color: #0000ee; text-decoration-thickness: 2px; letter-spacing: .1px; }

/* Desktop strip and dock */
.desk {
  position: relative;
  z-index: 1;
  flex: 1;
  padding: 4px 104px 10px;
  background:
    linear-gradient(rgba(3, 3, 6, .75), rgba(3, 3, 6, .45) 6px, transparent 50px),
    linear-gradient(35deg, transparent 0, #23284a 8px, #2e3556 22px, #8490b8 31px, #2a3150 40px, #11162a 62px, transparent 100px) right bottom / 130px 60px no-repeat,
    linear-gradient(109.5deg, #030306 0, #0a0a10 86px, #1b1b33 92px, #22234a 122px, #2c3684 138px, #4a62b0 148px, #26326e 160px, #181a3a 180px, #1e2240 203px) left / 160px 100% no-repeat,
    linear-gradient(97deg, #1e2240 0, #1e2240 160px, #262a40 330px, #b0b4c0 368px, #030306 374px, #0a0d20 395px, #202a60 402px, #0a0d20 410px, #a8b0c8 444px, #20242f 458px, #262c3a 860px, #7a86a0 952px, #b0b4bc 958px, #030306 962px, #06070c 1144px, #d4d8e0 1158px, #202838 1170px, #1c2230 1375px, #90a8dc 1392px, #10131c 1404px, #5a6cac 1416px, #242a3c 1434px, #2c3448 1576px, #06070c 1580px, #80889c 1590px, #7880a0 1670px, #030306 1680px, #030306 1745px, #5058a8 1762px, #8cb0e8 1770px, #030306 1776px, #030306 2130px, #4054a8 2204px, #1e2648 2225px, #a8b4d4 2258px, #2b3040 2279px, #242838 2570px, #a0a8d0 2588px, #20243a 2610px, #22263c 2860px, #12162a 2930px, #090c18 3010px);
}
.dock {
  height: 144px;
  display: flex;
  align-items: center;
  padding: 0 4px;
  border: 2px solid rgba(255, 255, 255, .17);
  border-radius: 44px;
  background: linear-gradient(90deg, #2b2c50 0, #2f3557 80px, #374060 290px, #343b50 380px, #2f3340 450px, #383e51 540px, #424859 770px, #363a44 860px, #282a2f 950px, #343948 1100px, #3e4158 1300px, #4c546c 1460px, #454b58 1540px, #272a34 1650px, #17181a 1750px, #191a1c 1930px, #25283c 2030px, #3a4464 2170px, #40465a 2330px, #3b3f55 2460px, #32364a 2580px, #3f4358 2700px, #363c4e 2816px);
  background-origin: border-box;
  box-shadow: 0 0 0 1px rgba(0, 0, 0, .5), 0 0 130px rgba(0, 0, 0, .26);
}
.slot {
  position: relative;
  flex: 1 1 0;
  height: 140px;
  display: flex;
  justify-content: center;
  padding-top: 19px;
}
.running::after {
  content: "";
  position: absolute;
  left: calc(50% - 5px);
  bottom: 2px;
  width: 8px;
  height: 8px;
  border-radius: 50%;
  background: #b3b6ce;
}
.app { width: 92px; height: 92px; filter: drop-shadow(0 1px 2px rgba(0, 0, 0, .4)); }
.petals { isolation: isolate; }
.petals rect { mix-blend-mode: multiply; }
.calendar {
  display: flex;
  flex-direction: column;
  align-items: center;
  border-radius: 21px;
  overflow: hidden;
  background: #f8f7f5;
}
.month { width: 100%; height: 28px; padding-top: 2px; background: #e2604f; color: #fff; font-size: 18px; line-height: 26px; font-weight: 700; text-align: center; }
.day { font-size: 57px; font-weight: 300; line-height: 60px; letter-spacing: -1px; color: #262626; }
.onenote { font: 700 25px "Open Sans", sans-serif; fill: #fff; text-anchor: middle; }
.prompt { font: 700 22px "DejaVu Sans Mono", monospace; fill: #fff; }
.wide { width: 114px; height: 104px; margin-top: -6px; }
.idle { width: 106px; height: 108px; margin-top: -7px; }
.foxtile { display: flex; justify-content: center; align-items: center; border-radius: 21px; background: #21123a; }
.foxtile svg { width: 80px; height: 82px; margin-top: -2px; }
.rule { flex: none; width: 55.6px; height: 108px; background: linear-gradient(#7c8090, #7c8090) center / 2px 100% no-repeat; }
.mini { position: relative; left: -1px; width: 107px; }
.light { height: 72px; margin-top: 10px; background: #fff; }
.dark { height: 60px; margin-top: 16px; background: #181818; }
.code { width: 107px; height: 60px; }
.badge { position: absolute; right: 3px; bottom: -15px; width: 34px; height: 34px; }
.dark .badge { bottom: -21px; }
.minibar { height: 7px; padding: 1px 2px; display: flex; gap: 1px; background: #26272c; }
.minibar i { width: 2px; height: 2px; border-radius: 1px; background: #c4574d; }
.minihead { display: block; width: 22px; height: 2px; margin: 3px auto 0; background: #f3b54c; }
.miniline { display: block; width: 9px; height: 2px; margin: 4px 0 0 4px; background: #9a92c0; }
.trash { width: 82px; height: 106px; margin-top: -10px; }
```
